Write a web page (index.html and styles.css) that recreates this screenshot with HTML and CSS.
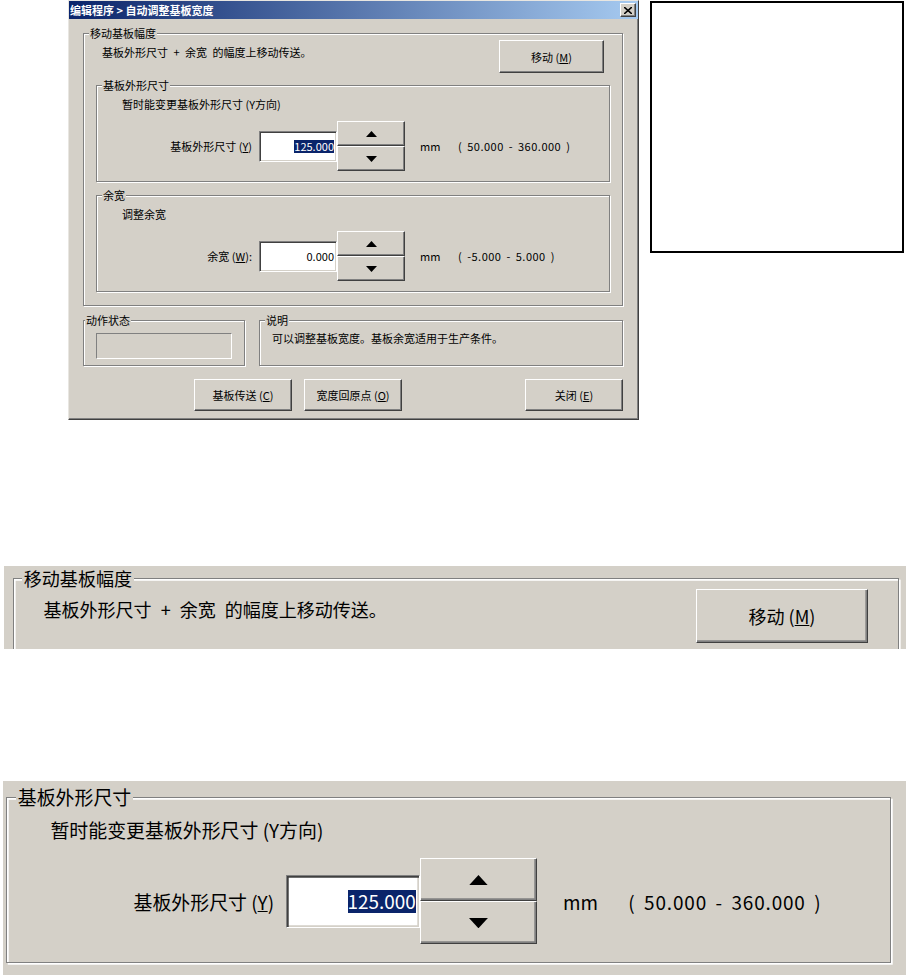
FILE: index.html
```html
<!DOCTYPE html>
<html lang="zh-CN">
<head>
  <meta charset="UTF-8">
  <title>编辑程序 &gt; 自动调整基板宽度</title>
  <link rel="stylesheet" href="styles.css">
</head>
<body>
  <div class="top">
    <div class="dialog">
      <div class="titlebar">
        <span class="title">编辑程序 &gt; 自动调整基板宽度</span>
        <span class="close">
          <svg width="8" height="7" viewBox="0 0 8 7"><path d="M0 0l8 7M8 0L0 7" stroke="#000" stroke-width="1.6"/></svg>
        </span>
      </div>
      <div class="dialog-body">
        <fieldset class="group move-group">
          <legend>移动基板幅度</legend>
          <div class="move-row">
            <span class="move-text">基板外形尺寸&ensp;+&ensp;余宽&ensp;的幅度上移动传送。</span>
            <button class="btn btn-move">移动 (<u>M</u>)</button>
          </div>
          <fieldset class="group sub-group">
            <legend>基板外形尺寸</legend>
            <p class="hint">暂时能变更基板外形尺寸 (Y方向)</p>
            <div class="spin-row">
              <span class="spin-label">基板外形尺寸 (<u>Y</u>)</span>
              <div class="field"><span class="selected">125.000</span></div>
              <div class="spinner">
                <button class="btn spin-btn"><svg width="11" height="6" viewBox="0 0 11 6"><path d="M0 6h11L5.5 0z"/></svg></button>
                <button class="btn spin-btn"><svg width="11" height="6" viewBox="0 0 11 6"><path d="M0 0h11L5.5 6z"/></svg></button>
              </div>
              <span class="unit">mm</span>
              <span class="range">( 50.000 - 360.000 )</span>
            </div>
          </fieldset>
          <fieldset class="group sub-group">
            <legend>余宽</legend>
            <p class="hint">调整余宽</p>
            <div class="spin-row">
              <span class="spin-label">余宽 (<u>W</u>):</span>
              <div class="field"><span>0.000</span></div>
              <div class="spinner">
                <button class="btn spin-btn"><svg width="11" height="6" viewBox="0 0 11 6"><path d="M0 6h11L5.5 0z"/></svg></button>
                <button class="btn spin-btn"><svg width="11" height="6" viewBox="0 0 11 6"><path d="M0 0h11L5.5 6z"/></svg></button>
              </div>
              <span class="unit">mm</span>
              <span class="range">( -5.000 - 5.000 )</span>
            </div>
          </fieldset>
        </fieldset>

        <div class="status-row">
          <fieldset class="group status-group">
            <legend>动作状态</legend>
            <div class="status-box"></div>
          </fieldset>
          <fieldset class="group note-group">
            <legend>说明</legend>
            <p class="note">可以调整基板宽度。基板余宽适用于生产条件。</p>
          </fieldset>
        </div>

        <div class="button-row">
          <button class="btn btn-action">基板传送 (<u>C</u>)</button>
          <button class="btn btn-action">宽度回原点 (<u>O</u>)</button>
          <button class="btn btn-action btn-close">关闭 (<u>E</u>)</button>
        </div>
      </div>
    </div>
    <div class="blank"></div>
  </div>

  <!-- enlarged views -->
  <div class="magnify magnify-move">
    <div class="magnify-inner">
      <fieldset class="group move-group">
        <legend>移动基板幅度</legend>
        <div class="move-row">
          <span class="move-text">基板外形尺寸&ensp;+&ensp;余宽&ensp;的幅度上移动传送。</span>
          <button class="btn btn-move">移动 (<u>M</u>)</button>
        </div>
      </fieldset>
    </div>
  </div>

  <div class="magnify magnify-size">
    <div class="magnify-inner">
      <fieldset class="group sub-group">
        <legend>基板外形尺寸</legend>
        <p class="hint">暂时能变更基板外形尺寸 (Y方向)</p>
        <div class="spin-row">
          <span class="spin-label">基板外形尺寸 (<u>Y</u>)</span>
          <div class="field"><span class="selected">125.000</span></div>
          <div class="spinner">
            <button class="btn spin-btn"><svg width="11" height="6" viewBox="0 0 11 6"><path d="M0 6h11L5.5 0z"/></svg></button>
            <button class="btn spin-btn"><svg width="11" height="6" viewBox="0 0 11 6"><path d="M0 0h11L5.5 6z"/></svg></button>
          </div>
          <span class="unit">mm</span>
          <span class="range">( 50.000 - 360.000 )</span>
        </div>
      </fieldset>
    </div>
  </div>
</body>
</html>
```

FILE: styles.css
```css
:root {
  --face: #d4d0c8;
  --shadow: #808080;
  --dark: #404040;
  --light: #fff;
  --select: #0a246a;
}

body {
  margin: 0;
  background: #fff;
  font-family: "Noto Sans CJK SC", "Noto Sans", sans-serif;
  font-size: 11px;
  color: #000;
}

p {
  margin: 0;
}

.top {
  display: flex;
  align-items: flex-start;
  padding-left: 68px;
}

.dialog {
  width: 571px;
  box-sizing: border-box;
  background: var(--face);
  border: 1px solid;
  border-color: #e8e6e1 var(--dark) var(--dark) #e8e6e1;
  box-shadow: inset -1px -1px 0 var(--shadow);
}

.titlebar {
  display: flex;
  align-items: center;
  justify-content: space-between;
  height: 18px;
  padding-left: 1px;
  background: linear-gradient(to right, var(--select), #a6caf0);
}

.title {
  color: #fff;
  font-weight: bold;
  line-height: 13px;
}

.close {
  display: flex;
  align-items: center;
  justify-content: center;
  width: 16px;
  height: 14px;
  margin-right: 2px;
  box-sizing: border-box;
  background: var(--face);
  border: 1px solid;
  border-color: var(--light) var(--dark) var(--dark) var(--light);
  box-shadow: inset -1px -1px 0 var(--shadow);
}

.dialog-body {
  padding: 8px 15px 8px 14px;
}

/* etched group box */
.group {
  box-sizing: border-box;
  margin: 0;
  padding: 0;
  min-width: 0;
  border: 1px solid var(--shadow);
  box-shadow: inset 1px 1px 0 var(--light), 1px 1px 0 var(--light);
}

.group > legend {
  margin-left: 5px;
  padding: 0 1px;
  line-height: 13px;
  background: var(--face);
}

.btn {
  box-sizing: border-box;
  padding: 0;
  font: inherit;
  color: #000;
  background: var(--face);
  border: 1px solid;
  border-color: var(--light) var(--dark) var(--dark) var(--light);
  box-shadow: inset -1px -1px 0 var(--shadow);
  display: flex;
  align-items: center;
  justify-content: center;
}

.move-group {
  padding-bottom: 13px;
}

.move-row {
  display: flex;
  justify-content: space-between;
  align-items: flex-start;
  padding: 0 18px;
}

.move-text {
  margin-top: 6px;
  line-height: 13px;
}

.btn-move {
  width: 105px;
  height: 33px;
}

.sub-group {
  margin: 6px 12px 0;
  padding-bottom: 10px;
}

.sub-group + .sub-group {
  margin-top: 7px;
}

.hint {
  margin: 6px 0 0 25px;
  line-height: 13px;
}

.spin-row {
  display: flex;
  align-items: center;
  margin-top: 10px;
  padding-left: 25px;
}

.spin-label {
  width: 130px;
  margin-right: 7px;
  text-align: right;
}

.field {
  display: flex;
  align-items: center;
  justify-content: flex-end;
  width: 78px;
  height: 31px;
  box-sizing: border-box;
  padding-right: 2px;
  background: #fff;
  border: 1px solid;
  border-color: var(--shadow) var(--light) var(--light) var(--shadow);
  box-shadow: inset 1px 1px 0 var(--dark), inset -1px -1px 0 var(--face);
  line-height: 13px;
}

.selected {
  background: var(--select);
  color: #fff;
}

.spinner {
  display: flex;
  flex-direction: column;
}

.spin-btn {
  width: 68px;
  height: 25px;
}

.unit {
  width: 38px;
  margin-left: 15px;
}

.range {
  white-space: pre;
  letter-spacing: 0.5px;
  word-spacing: 2px;
}

.status-row {
  display: flex;
  margin-top: 8px;
}

.status-group {
  width: 162px;
  padding: 0 12px 6px;
}

.status-group > legend {
  margin-left: -11px;
}

.status-box {
  height: 26px;
  margin-top: 6px;
  box-sizing: border-box;
  border: 1px solid;
  border-color: var(--shadow) var(--light) var(--light) var(--shadow);
}

.note-group {
  flex: 1;
  margin-left: 14px;
}

.note {
  margin: 5px 0 0 12px;
  line-height: 13px;
}

.button-row {
  display: flex;
  gap: 12px;
  margin-top: 13px;
  padding-left: 111px;
}

.btn-action {
  width: 98px;
  height: 32px;
}

.btn-close {
  margin-left: auto;
}

.blank {
  width: 254px;
  height: 252px;
  box-sizing: border-box;
  margin: 1px 0 0 11px;
  border: 2px solid #000;
}

/* enlarged views */
.magnify {
  background: var(--face);
  overflow: hidden;
}

.magnify-move {
  height: 83px;
  margin: 146px 0 0 4px;
}

.magnify-move .magnify-inner {
  zoom: 1.64;
}

.magnify-move .move-group {
  width: 540px;
  height: 100px;
  margin: 1px 0 0 5.5px;
}

.magnify-size {
  height: 194px;
  margin: 132px 0 0 3px;
}

.magnify-size .magnify-inner {
  zoom: 1.72;
}

.magnify-size .sub-group {
  width: 514px;
  margin: 3px 0 0 2px;
}
```
